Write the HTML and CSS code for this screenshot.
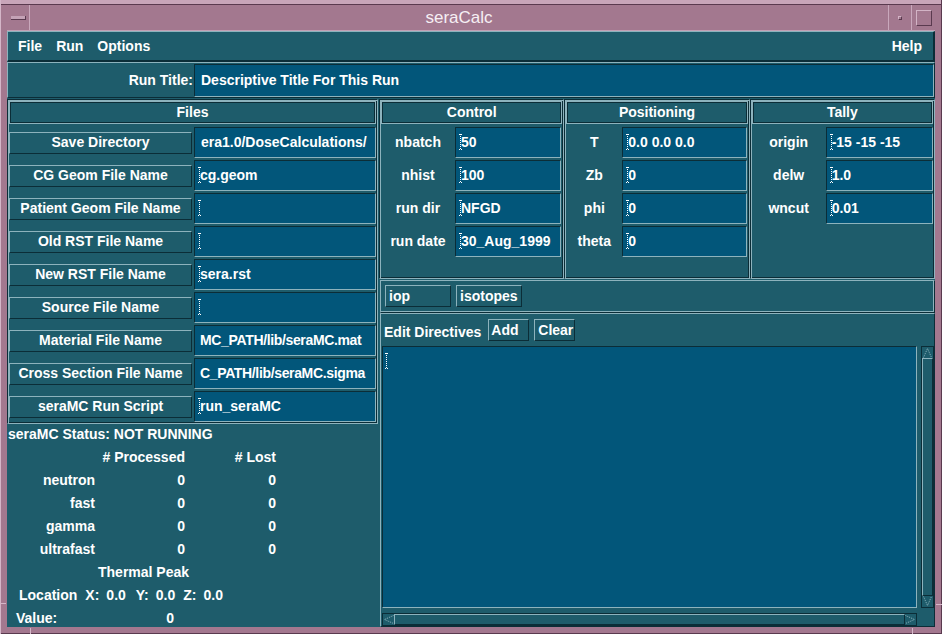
FILE: index.html
```html
<!DOCTYPE html>
<html>
<head>
<meta charset="utf-8">
<title>seraCalc</title>
<link rel="stylesheet" href="styles.css">
</head>
<body>
<div class="window">
  <span class="mark mark-l"></span><span class="mark mark-r"></span><span class="mark mark-bl"></span><span class="mark mark-br"></span>
  <div class="titlebar">
    <div class="tb-btn tb-menu"><span class="tb-dash"></span></div>
    <div class="tb-title">seraCalc</div>
    <div class="tb-btn tb-min"><span class="tb-dot"></span></div>
    <div class="tb-btn tb-max"><span class="tb-sq"></span></div>
  </div>
  <div class="client">
    <div class="menubar">
      <span class="menu">File</span><span class="menu">Run</span><span class="menu">Options</span><span class="menu help">Help</span>
    </div>
    <div class="runrow">
      <div class="runlabel">Run Title:</div>
      <div class="field runfield"><span class="txt nocur">Descriptive Title For This Run</span></div>
    </div>
    <div class="main">
      <div class="leftcol">
        <div class="panel files">
          <div class="phead">Files</div>
          <div class="frows">
            <div class="frow"><div class="btn fbtn">Save Directory</div><div class="field"><span class="txt nocur">era1.0/DoseCalculations/</span></div></div>
            <div class="frow"><div class="btn fbtn">CG Geom File Name</div><div class="field"><span class="cur"></span><span class="txt">cg.geom</span></div></div>
            <div class="frow"><div class="btn fbtn">Patient Geom File Name</div><div class="field"><span class="cur"></span></div></div>
            <div class="frow"><div class="btn fbtn">Old RST File Name</div><div class="field"><span class="cur"></span></div></div>
            <div class="frow"><div class="btn fbtn">New RST File Name</div><div class="field"><span class="cur"></span><span class="txt">sera.rst</span></div></div>
            <div class="frow"><div class="btn fbtn">Source File Name</div><div class="field"><span class="cur"></span></div></div>
            <div class="frow"><div class="btn fbtn">Material File Name</div><div class="field"><span class="txt nocur tight">MC_PATH/lib/seraMC.mat</span></div></div>
            <div class="frow"><div class="btn fbtn">Cross Section File Name</div><div class="field"><span class="txt nocur tight">C_PATH/lib/seraMC.sigma</span></div></div>
            <div class="frow"><div class="btn fbtn">seraMC Run Script</div><div class="field"><span class="cur"></span><span class="txt">run_seraMC</span></div></div>
          </div>
        </div>
        <div class="status">
          <div class="srow">seraMC Status: NOT RUNNING</div>
          <div class="srow"><span class="c1"></span><span class="c2"># Processed</span><span class="c3"># Lost</span></div>
          <div class="srow"><span class="c1">neutron</span><span class="c2">0</span><span class="c3">0</span></div>
          <div class="srow"><span class="c1">fast</span><span class="c2">0</span><span class="c3">0</span></div>
          <div class="srow"><span class="c1">gamma</span><span class="c2">0</span><span class="c3">0</span></div>
          <div class="srow"><span class="c1">ultrafast</span><span class="c2">0</span><span class="c3">0</span></div>
          <div class="srow peak">Thermal Peak</div>
          <div class="srow loc"><span>Location</span><span class="lx">X:</span><span class="lv">0.0</span><span class="ly">Y:</span><span class="lv">0.0</span><span class="lz">Z:</span><span class="lv">0.0</span></div>
          <div class="srow val"><span>Value:</span><span class="vnum">0</span></div>
        </div>
      </div>
      <div class="rightcol">
        <div class="top3">
          <div class="panel control">
            <div class="phead">Control</div>
            <div class="pgrid">
              <div class="plabel">nbatch</div><div class="field"><span class="cur"></span><span class="txt">50</span></div>
              <div class="plabel">nhist</div><div class="field"><span class="cur"></span><span class="txt">100</span></div>
              <div class="plabel">run dir</div><div class="field"><span class="cur"></span><span class="txt">NFGD</span></div>
              <div class="plabel">run date</div><div class="field"><span class="cur"></span><span class="txt">30_Aug_1999</span></div>
            </div>
          </div>
          <div class="panel positioning">
            <div class="phead">Positioning</div>
            <div class="pgrid">
              <div class="plabel">T</div><div class="field"><span class="cur"></span><span class="txt">0.0 0.0 0.0</span></div>
              <div class="plabel">Zb</div><div class="field"><span class="cur"></span><span class="txt">0</span></div>
              <div class="plabel">phi</div><div class="field"><span class="cur"></span><span class="txt">0</span></div>
              <div class="plabel">theta</div><div class="field"><span class="cur"></span><span class="txt">0</span></div>
            </div>
          </div>
          <div class="panel tally">
            <div class="phead">Tally</div>
            <div class="pgrid">
              <div class="plabel">origin</div><div class="field"><span class="cur"></span><span class="txt">-15 -15 -15</span></div>
              <div class="plabel">delw</div><div class="field"><span class="cur"></span><span class="txt">1.0</span></div>
              <div class="plabel">wncut</div><div class="field"><span class="cur"></span><span class="txt">0.01</span></div>
            </div>
          </div>
        </div>
        <div class="isorow">
          <div class="btn smallbtn iop">iop</div>
          <div class="btn smallbtn">isotopes</div>
        </div>
        <div class="edit">
          <div class="edithead">
            <span class="editlabel">Edit Directives</span>
            <div class="btn smallbtn addbtn">Add</div>
            <div class="btn smallbtn clearbtn">Clear</div>
          </div>
          <div class="editbody">
            <div class="textarea"><span class="cur tall"></span></div>
            <div class="vscroll">
              <div class="arr"><svg width="11" height="11" viewBox="0 0 11 11"><path d="M1.5 10.5 L5.5 1.5 L9.5 10.5" fill="none" stroke="#8db3bd" stroke-dasharray="1 1"/></svg></div>
              <div class="thumb"></div>
              <div class="arr"><svg width="11" height="11" viewBox="0 0 11 11"><path d="M1.5 0.5 L5.5 9.5 L9.5 0.5" fill="none" stroke="#8db3bd" stroke-dasharray="1 1"/></svg></div>
            </div>
          </div>
          <div class="hscroll">
            <div class="arr"><svg width="11" height="11" viewBox="0 0 11 11"><path d="M10.5 1.5 L1.5 5.5 L10.5 9.5" fill="none" stroke="#8db3bd" stroke-dasharray="1 1"/></svg></div>
            <div class="thumb"></div>
            <div class="arr"><svg width="11" height="11" viewBox="0 0 11 11"><path d="M0.5 1.5 L9.5 5.5 L0.5 9.5" fill="none" stroke="#8db3bd" stroke-dasharray="1 1"/></svg></div>
          </div>
        </div>
      </div>
    </div>
  </div>
</div>
</body>
</html>
```

FILE: styles.css
```css
* { box-sizing: border-box; }
html, body { margin: 0; padding: 0; }
body {
  width: 942px;
  height: 634px;
  overflow: hidden;
  background: #a3788f;
  font: bold 14px "Liberation Sans", Arial, sans-serif;
  color: #ffffff;
}

/* window frame */
.window {
  position: relative;
  width: 942px;
  height: 634px;
  padding: 5px 7px 7px 7px;
  background: linear-gradient(#c8a5b9 0 4px, #5a3a4f 4px 5px, #a3788f 5px);
  box-shadow: inset 1px 0 0 #d4b6c8, inset -1px -1px 0 #5a3a4f;
  display: flex;
  flex-direction: column;
}
/* resize-corner notches drawn over the frame */
.mark { position: absolute; background: #d4b6c8; }
.mark-l { left: 0; top: 603px; width: 6px; height: 1px; }
.mark-r { right: 0; top: 604px; width: 6px; height: 1px; }
.mark-bl { left: 30px; bottom: 0; width: 1px; height: 6px; }
.mark-br { left: 912px; bottom: 0; width: 1px; height: 6px; }

.titlebar {
  flex: none;
  height: 26px;
  display: flex;
  border-bottom: 1px solid #c3a0b4;
}
.tb-btn { flex: none; display: flex; align-items: center; justify-content: center; }
.tb-menu { width: 23px; border-right: 1px solid #c9a8bc; }
.tb-dash {
  width: 15px; height: 4px;
  background: #c4a2b6;
  border-bottom: 1px solid #5a3a4f;
  border-right: 1px solid #5a3a4f;
}
.tb-title {
  flex: 1;
  text-align: center;
  font-weight: normal;
  font-size: 17px;
  line-height: 25px;
  color: #f6eff4;
}
.tb-min { width: 24px; border-left: 1px solid #c9a8bc; border-right: 1px solid #c9a8bc; }
.tb-dot {
  width: 4px; height: 4px;
  border: 1px solid;
  border-color: #d3b4c6 #5a3a4f #5a3a4f #d3b4c6;
}
.tb-max { width: 23px; }
.tb-sq {
  width: 16px; height: 16px;
  border: 1px solid;
  border-color: #d3b4c6 #5a3a4f #5a3a4f #d3b4c6;
}

/* client */
.client {
  flex: 1;
  min-height: 0;
  background: #1e5c6b;
  display: flex;
  flex-direction: column;
  overflow: hidden;
}
.menubar {
  flex: none;
  height: 31px;
  display: flex;
  align-items: center;
  padding: 0 10px;
  border-top: 1px solid #8db3bd;
  border-left: 1px solid #8db3bd;
  border-bottom: 2px solid #0b2d37;
  border-right: 2px solid #0b2d37;
}
.menu { margin-right: 14px; }
.menu.help { margin-left: auto; margin-right: 1px; }

.runrow {
  flex: none;
  height: 36px;
  display: flex;
  padding-top: 1px;
  border-top: 1px solid #8db3bd;
  border-left: 1px solid #8db3bd;
  border-bottom: 1px solid #0b2d37;
  border-right: 1px solid #0b2d37;
}
.runlabel {
  width: 186px;
  flex: none;
  text-align: right;
  padding-right: 1px;
  line-height: 33px;
}
.runfield { flex: 1; height: 33px; }

/* common widgets */
.field {
  background: #02567a;
  border: 1px solid;
  border-color: #0b2d37 #8db3bd #8db3bd #0b2d37;
  display: flex;
  align-items: center;
  padding-left: 3px;
  padding-bottom: 2px;
  white-space: nowrap;
  overflow: hidden;
}
.txt { white-space: nowrap; }
.txt.nocur { padding-left: 3px; }
.txt.tight { letter-spacing: -0.35px; padding-left: 2px; }
.cur {
  flex: none;
  display: inline-block;
  width: 3px;
  height: 16px;
  margin-right: -1px;
  background:
    linear-gradient(#ffffff, #ffffff) 0 0 / 1px 1px no-repeat,
    linear-gradient(#ffffff, #ffffff) 2px 0 / 1px 1px no-repeat,
    linear-gradient(#ffffff, #ffffff) 0 100% / 1px 1px no-repeat,
    linear-gradient(#ffffff, #ffffff) 2px 100% / 1px 1px no-repeat,
    repeating-linear-gradient(#ffffff 0 1px, transparent 1px 2px) 1px 0 / 1px 100% no-repeat;
}
.btn {
  border: 1px solid;
  border-color: #8db3bd #0b2d37 #0b2d37 #8db3bd;
  display: flex;
  align-items: center;
  white-space: nowrap;
}
.panel {
  border: 1px solid;
  border-color: #0b2d37 #8db3bd #8db3bd #0b2d37;
  box-shadow: inset 1px 1px 0 #8db3bd, inset -1px -1px 0 #0b2d37;
  padding: 1px;
}
.phead {
  height: 23px;
  border: 1px solid #8db3bd;
  box-shadow: inset 0 0 0 1px #0b2d37;
  text-align: center;
  line-height: 21px;
}

/* layout */
.main { flex: 1; min-height: 0; display: flex; }
.leftcol { width: 371px; flex: none; display: flex; flex-direction: column; }
.files { margin-top: 1px; height: 325px; flex: none; }
.frows { margin-top: 3px; display: flex; flex-direction: column; gap: 2px; }
.frow { display: flex; align-items: center; gap: 2px; height: 31px; }
.fbtn { width: 183px; height: 22px; justify-content: center; padding-bottom: 1px; }
.frow .field { width: 182px; height: 31px; }

.status { flex: 1; margin-top: -2px; overflow: hidden; }
.srow { height: 23px; display: flex; align-items: center; padding-left: 1px; white-space: nowrap; }
.c1 { width: 87px; text-align: right; }
.c2 { width: 90px; text-align: right; }
.c3 { width: 91px; text-align: right; }
.srow.peak { padding-left: 91px; }
.srow.loc { padding-left: 12px; }
.lx { margin-left: 8px; }
.ly { margin-left: 10px; }
.lz { margin-left: 8px; }
.lv { margin-left: 7px; }
.srow.val { padding-left: 9px; }
.vnum { margin-left: 109px; }

.rightcol { flex: 1; min-width: 0; display: flex; flex-direction: column; }
.top3 { flex: none; margin-top: 1px; height: 180px; display: flex; padding-left: 1px; }
.top3 .panel { flex: 1; min-width: 0; }
.pgrid { margin-top: 3px; display: grid; grid-auto-rows: 31px; row-gap: 2px; }
.control .pgrid { grid-template-columns: 74px 106px; }
.positioning .pgrid { grid-template-columns: 56px 125px; }
.tally .pgrid { grid-template-columns: 74px 107px; }
.plabel { text-align: center; align-self: center; white-space: nowrap; padding-bottom: 2px; }

.isorow {
  flex: none;
  margin: 1px 0 0 2px;
  height: 33px;
  display: flex;
  gap: 5px;
  padding: 4px 4px 5px 4px;
  border: 1px solid;
  border-color: #8db3bd #0b2d37 #0b2d37 #8db3bd;
  box-shadow: inset -1px -1px 0 #8db3bd;
}
.smallbtn { height: 22px; width: 66px; padding-left: 3px; }

.edit {
  flex: 1;
  min-height: 0;
  margin-left: 2px;
  border: 1px solid;
  border-color: #8db3bd #0b2d37 #0b2d37 #8db3bd;
  padding: 5px 0 0 1px;
  display: flex;
  flex-direction: column;
}
.edithead { display: flex; align-items: center; height: 22px; flex: none; }
.editlabel { margin-left: 2px; margin-top: 3px; margin-right: 7px; }
.addbtn { width: 41px; padding-left: 2px; }
.clearbtn { width: 41px; padding-left: 3px; margin-left: 5px; }
.editbody { margin-top: 5px; height: 262px; flex: none; display: flex; gap: 4px; }
.textarea {
  width: 535px;
  background: #02567a;
  border: 1px solid;
  border-color: #0b2d37 #8db3bd #8db3bd #0b2d37;
  padding: 6px 0 0 2px;
}
.cur.tall { display: block; height: 16px; }
.vscroll {
  width: 13px;
  border: 1px solid #0b2d37;
  display: flex;
  flex-direction: column;
}
.vscroll .arr { height: 11px; flex: none; }
.arr svg { display: block; }
.thumb {
  flex: 1;
  border: 1px solid;
  border-color: #8db3bd #0b2d37 #0b2d37 #8db3bd;
}
.hscroll {
  margin-top: 5px;
  width: 535px;
  height: 13px;
  flex: none;
  border: 1px solid #0b2d37;
  display: flex;
}
.hscroll .arr { width: 11px; flex: none; }
```
